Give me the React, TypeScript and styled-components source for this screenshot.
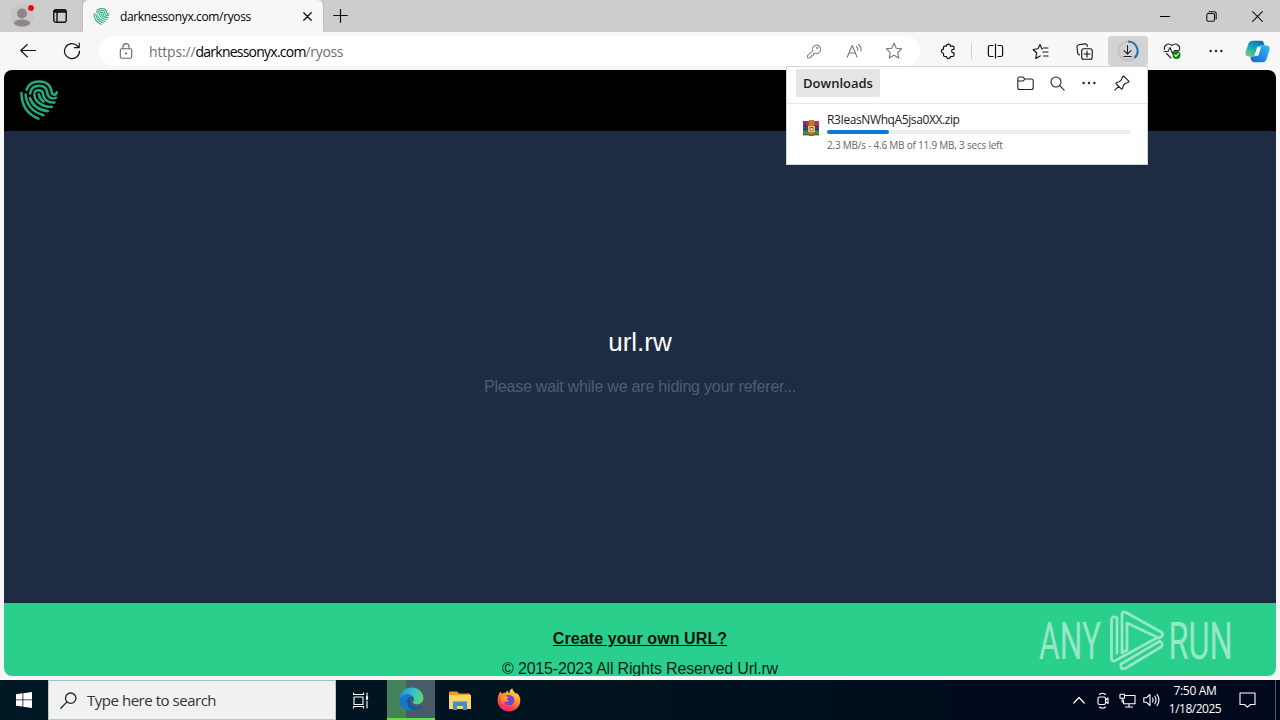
import type { ReactNode } from "react";
import styled, { createGlobalStyle } from "styled-components";

const GlobalStyle = createGlobalStyle`
  body {
    margin: 0;
    overflow: hidden;
    font-family: "Open Sans", "Noto Sans", sans-serif;
  }

  svg {
    display: block;
    flex: none;
  }
`;

const Screen = styled.div`
  position: relative;
  display: flex;
  flex-direction: column;
  width: 1280px;
  height: 720px;
  overflow: hidden;
  background: #f7f7f7;
`;

const Text = styled.span<{ $size: number; $spacing?: number; $color?: string; $weight?: number }>`
  font-size: ${(p) => p.$size}px;
  letter-spacing: ${(p) => p.$spacing ?? 0}px;
  color: ${(p) => p.$color ?? "#000"};
  font-weight: ${(p) => p.$weight ?? 400};
  white-space: nowrap;
`;

const Slot = styled.div<{ $w: number }>`
  display: flex;
  flex: none;
  align-items: center;
  justify-content: center;
  width: ${(p) => p.$w}px;
  height: 100%;
`;

const TabStrip = styled.div`
  display: flex;
  flex: none;
  height: 32px;
  background: #cdcdcd;
`;

const TabTools = styled.div`
  display: flex;
  width: 83px;
  box-sizing: border-box;
  padding-left: 3px;
  border-bottom-right-radius: 6px;
  border-right: 1px solid #bdbdbd;
`;

const Tab = styled.div`
  display: flex;
  align-items: center;
  width: 240px;
  box-sizing: border-box;
  padding-left: 10px;
  background: #f7f7f7;
  border-radius: 6px 6px 0 0;
`;

const TabTitle = styled.div`
  flex: 1;
  padding-left: 10px;
  line-height: 30px;
`;

const NewTab = styled.div`
  display: flex;
  align-items: center;
  flex: 1;
  padding-left: 9px;
  border-left: 1px solid #bdbdbd;
  border-bottom-left-radius: 6px;
`;

const Toolbar = styled.div`
  display: flex;
  flex: none;
  align-items: center;
  height: 38px;
  padding-left: 6px;
`;

const AddressBar = styled.div`
  display: flex;
  align-items: center;
  width: 821px;
  height: 30px;
  margin: 0 5px 0 5px;
  background: #fff;
  border-radius: 15px;
`;

const LockBox = styled.div`
  width: 50px;
  box-sizing: border-box;
  padding-left: 20px;
`;

const Url = styled.div`
  display: flex;
  flex: 1;
`;

const Divider = styled.div`
  width: 1px;
  height: 16px;
  margin: 0 1px;
  background: #cfcfcf;
`;

const DownloadButton = styled.div`
  display: flex;
  align-items: center;
  justify-content: center;
  width: 40px;
  height: 30px;
  background: #d3d3d3;
  border-radius: 4px;
`;

const Viewport = styled.div`
  display: flex;
  flex: none;
  flex-direction: column;
  height: 606px;
  margin: 0 4px 4px;
  overflow: hidden;
  border-radius: 8px;
  font-family: "Liberation Sans", Arial, sans-serif;
`;

const SiteHeader = styled.div`
  height: 61px;
  box-sizing: border-box;
  padding: 10px 16px;
  background: #000;
`;

const SiteBody = styled.div`
  display: flex;
  flex-direction: column;
  align-items: center;
  height: 472px;
  box-sizing: border-box;
  padding-top: 196px;
  background: #1d2c43;
`;

const Title = styled.div`
  color: #fff;
  font-size: 26px;
  line-height: 30px;
`;

const Notice = styled.div`
  margin-top: 21px;
  color: #4f5c72;
  font-size: 16px;
  letter-spacing: -0.21px;
  line-height: 18px;
`;

const SiteFooter = styled.div`
  display: flex;
  flex-direction: column;
  align-items: center;
  height: 73px;
  padding-top: 27px;
  box-sizing: border-box;
  background: #2acf8b;
  color: #06251a;
  font-size: 16px;
  line-height: 18px;
`;

const CreateLink = styled.a`
  margin-bottom: 12px;
  color: #03140d;
  font-weight: 700;
  letter-spacing: 0.09px;
  text-decoration: underline;
`;

const Copyright = styled.div`
  letter-spacing: -0.19px;
`;

const Popup = styled.div`
  position: absolute;
  left: 786px;
  top: 66px;
  width: 362px;
  height: 99px;
  box-sizing: border-box;
  background: #fff;
  border: 1px solid #d5d5d5;
`;

const PopupHeader = styled.div`
  display: flex;
  align-items: flex-start;
  height: 36px;
  padding: 0 9px;
  border-bottom: 1px solid #e6e6e6;
`;

const PopupTitle = styled.div`
  display: flex;
  align-items: center;
  justify-content: center;
  width: 84px;
  height: 28px;
  margin: 2px auto 0 0;
  background: #e5e5e5;
  border-radius: 2px;
`;

const PopupTools = styled.div`
  display: flex;
  height: 32px;
`;

const DownloadRow = styled.div`
  display: flex;
  align-items: flex-start;
  padding: 8px 16px 0 16px;
`;

const ArchiveIcon = styled.div`
  padding: 8px 8px 0 0;
`;

const DownloadInfo = styled.div`
  display: flex;
  flex: 1;
  flex-direction: column;
  line-height: 16px;
`;

const Track = styled.div`
  height: 4px;
  margin: 2px 0 3px;
  background: #ededed;
  border-radius: 2px;
`;

const Fill = styled.div`
  height: 4px;
  background: #0a78d4;
  border-radius: 2px;
`;

const Watermark = styled.div`
  position: absolute;
  left: 1034px;
  top: 604px;
`;

const Taskbar = styled.div`
  display: flex;
  flex: none;
  height: 40px;
  background: linear-gradient(90deg, #001823 0%, #00131f 50%, #000a1c 85%);
`;

const SearchBox = styled.div`
  display: flex;
  align-items: center;
  width: 288px;
  box-sizing: border-box;
  padding-left: 11px;
  gap: 10px;
  background: #f1f1f1;
  border: 1px solid #b9c6c8;
  border-top-color: #9cc4c0;
`;

const ActiveApp = styled.div`
  display: flex;
  align-items: center;
  justify-content: center;
  width: 48px;
  height: 40px;
  box-sizing: border-box;
  margin-left: 3px;
  background: linear-gradient(90deg, #43835a 0 19px, #485b66 19px);
  border-bottom: 2px solid #5fe04a;
`;

const Tray = styled.div`
  display: flex;
  margin-left: auto;
`;

const Clock = styled.div`
  display: flex;
  flex-direction: column;
  align-items: center;
  width: 62px;
  padding-top: 2px;
  line-height: 18px;
`;

const DesktopEdge = styled.div`
  width: 4px;
  margin-left: 6px;
  border-left: 1px solid #4b5361;
`;

type IconProps = { w: number; h?: number; box?: string; color?: string; stroke?: number; children: ReactNode };

const Icon = ({ w, h = w, box, color = "#222", stroke = 1.1, children }: IconProps) => (
  <svg
    width={w}
    height={h}
    viewBox={box ?? `0 0 ${w} ${h}`}
    fill="none"
    stroke={color}
    strokeWidth={stroke}
    strokeLinecap="round"
    strokeLinejoin="round"
  >
    {children}
  </svg>
);

const Fingerprint = ({ w, h, color }: { w: number; h: number; color: string }) => (
  <Icon w={w} h={h} box="0 0 38 40" color={color} stroke={2.5}>
    <path d="M1.400 13C1.600 26 8 34.500 18.500 38.600" />
    <path d="M5.600 14.500C6.500 25.500 12.500 32 23.500 35.200" />
    <path d="M6.600 9.500C8.500 3.500 13.500 1.400 19.500 1.400c7 0 11.300 4.200 11.900 9.600.5 4.700 4.600 4.700 5.300 1.200" />
    <path d="M9.900 18C12.500 25.500 18.500 30 28 31.200" />
    <path d="M10.200 13.500C10.800 8.300 14.500 5.800 19.300 5.800c4.700 0 7.400 2.600 7.900 6.700.6 5 4.400 7 8.600 5.300" />
    <path d="M14.300 14.300C14.800 21.500 21.500 27 31.800 27" />
    <path d="M14.800 12.300c1-2.500 7.400-3.300 8.200 1.500.9 6.200 5.300 9.400 11.500 8.700" />
    <path d="M18.700 14.200c.6 3.200 2.100 5.300 4.700 7.200" />
  </Icon>
);

const EdgeLogo = () => (
  <svg width="25" height="25" viewBox="0 0 25 25">
    <defs>
      <linearGradient id="edgeTop" x1="0" y1="0.3" x2="1" y2="0.5">
        <stop offset="0" stopColor="#238ed0" />
        <stop offset="0.5" stopColor="#31bfd0" />
        <stop offset="1" stopColor="#5adb71" />
      </linearGradient>
    </defs>
    <path d="M.6 12C1 5 6 .6 12.500.6 19.500.6 24.400 5.500 24.400 11c0 4-3 6.300-6.500 6.300-3 0-4.200-1.200-4-2.200.2-.7 1.100-1.200 1.100-3C15 9.500 12.200 7.400 8.800 7.400 4.500 7.400 1.600 10 .6 12z" fill="url(#edgeTop)" />
    <path d="M.6 12.500C1.500 9.500 4.500 7.400 8.300 7.400c3 0 5.200 1.200 6 3-4-1.400-6.500 1.500-6.300 5 .2 5 4.500 8.600 9.300 8.200C9 26.400.4 21 .6 12.500z" fill="#1677cf" />
    <path d="M14.300 10.400c-4.500-1.400-7.300 2-6.200 6 1.500 5.300 6.500 8.200 11.300 6.300 1.700-.8 3-2 3.800-3.300.3-.6-.2-.8-.7-.5-5.500 2.700-12-.5-11.200-5.600.2-1.500 1.200-2.600 3-2.900z" fill="#15599f" />
  </svg>
);

const FirefoxLogo = () => (
  <svg width="24" height="24" viewBox="0 0 24 24">
    <defs>
      <linearGradient id="fox" x1="0.8" y1="0" x2="0.3" y2="1">
        <stop offset="0" stopColor="#fff14f" />
        <stop offset="0.4" stopColor="#ff9b27" />
        <stop offset="0.75" stopColor="#ff4051" />
        <stop offset="1" stopColor="#e3208b" />
      </linearGradient>
    </defs>
    <path d="M3.500 3.500c.3 1 .8 1.700 1.500 2.200C6 5 7.500 4.600 8.600 4.800c.4-.9 1.200-1.700 2.200-2.200-.1 1 .4 2 1.700 2.700C12.200 3 13.500 1 15.500.4c0 2.600 2.200 3.700 3.800 5.500.3-.3.300-.9.200-1.500 2.500 2.300 3.800 5 3.800 8.200C23.300 18.800 18.400 23.500 12 23.500S.6 18.700.6 12.600c0-3.700 1-6.500 2.900-9.100z" fill="url(#fox)" />
    <path d="M7.500 8.600c2-2 5.800-2.500 8.300-.1 2.500 2.500 1.800 7-1.400 8.400-3.500 1.400-7-.8-7.200-3.800 1.500 1 3.500.6 4.600-.6-1.300-.3-1.900-1-2-1.900l2-1.100c-1.300-.7-2.800-1-4.300-.9z" fill="#7442d6" />
    <path d="M4.500 9c1-1.300 4.500-1.800 6.900.500l-2 1.400c0 1 .8 1.600 2.200 1.800-1.300 1.500-4 1.500-5.300.1-.7 1 0 3 1 4C4.500 15.500 3.500 11.500 4.500 9z" fill="#ff9a2c" />
  </svg>
);

const CopilotLogo = () => (
  <svg width="25" height="23" viewBox="0 0 26 24">
    <defs>
      <linearGradient id="coA" x1="0.8" y1="0" x2="0.2" y2="1">
        <stop offset="0" stopColor="#1762ba" />
        <stop offset="0.5" stopColor="#18a9b8" />
        <stop offset="1" stopColor="#63cf78" />
      </linearGradient>
      <linearGradient id="coB" x1="1" y1="0" x2="0" y2="1">
        <stop offset="0" stopColor="#2dbcf5" />
        <stop offset="1" stopColor="#1b5fdc" />
      </linearGradient>
    </defs>
    <path d="M8 .8h8.500c2 0 2.800 1.200 3.300 3l.7 2h-3.300c-2 0-3 1-3.600 3l-1.800 6c-.5 1.600-1.400 2.400-3.100 2.400H4c-3 0-4.200-2-3.300-5L3.300 4.500C4 2.200 5.500.8 8 .8z" fill="url(#coA)" />
    <path d="M18 23.200H9.500c-2 0-2.800-1.200-3.300-3l-.8-3h3.300c2 0 3-.9 3.500-2.500l2-6.300c.5-1.600 1.500-2.600 3.200-2.600H22c3 0 4.200 2 3.300 5l-2.600 8.600c-.7 2.400-2.200 3.800-4.700 3.800z" fill="url(#coB)" />
    <path d="M12.800 7h4l-3 9.500H9.800z" fill="#fff" />
  </svg>
);

const Star = ({ color }: { color: string }) => (
  <Icon w={18} color={color}>
    <path d="M9 1.300l2.300 5 5.400.6-4 3.700 1.100 5.400L9 13.300 4.200 16l1.100-5.400-4-3.700 5.400-.6z" />
  </Icon>
);

const Dots = () => (
  <svg width="14" height="4" viewBox="0 0 14 4" fill="#222">
    <circle cx="1.600" cy="2" r="1.200" />
    <circle cx="7" cy="2" r="1.200" />
    <circle cx="12.400" cy="2" r="1.200" />
  </svg>
);

const BrowserTabs = () => (
  <TabStrip>
    <TabTools>
      <Slot $w={38}>
        <svg width="26" height="26" viewBox="0 0 26 26">
          <circle cx="13" cy="13" r="12" fill="#c8c6c4" />
          <circle cx="13" cy="10.500" r="5" fill="#8b8886" />
          <path d="M5 20.500c0-5.500 16-5.500 16 0-2 4-14 4-16 0z" fill="#8b8886" />
          <circle cx="22" cy="5" r="3" fill="#df1018" />
        </svg>
      </Slot>
      <Slot $w={38}>
        <Icon w={14} color="#111" stroke={1.4}>
          <rect x=".8" y=".8" width="12.400" height="12.400" rx="2" />
          <path d="M1.500 2.500h11" strokeWidth="2.400" />
          <path d="M4 3v10" />
        </Icon>
      </Slot>
    </TabTools>
    <Tab>
      <Fingerprint w={17} h={17} color="#2fae86" />
      <TabTitle>
        <Text $size={12} $spacing={-0.36}>darknessonyx.com/ryoss</Text>
      </TabTitle>
      <Slot $w={32}>
        <Icon w={9} color="#111" stroke={1.3}>
          <path d="M.8.8l7.400 7.400M8.200.8L.8 8.200" />
        </Icon>
      </Slot>
    </Tab>
    <NewTab>
      <Icon w={15} h={14} color="#111" stroke={1.2}>
        <path d="M7.500.5v13M.7 6.500h13.600" />
      </Icon>
    </NewTab>
    <Slot $w={46}>
      <Icon w={10} color="#000" stroke={1}>
        <path d="M0 5.500h10" />
      </Icon>
    </Slot>
    <Slot $w={46}>
      <Icon w={11} color="#111">
        <rect x=".8" y="2.500" width="7.700" height="7.700" rx="1.500" />
        <path d="M3 .7h5.200q2 0 2 2V8" />
      </Icon>
    </Slot>
    <Slot $w={46}>
      <Icon w={11} color="#111">
        <path d="M.6.6l9.800 9.800M10.400.6L.6 10.400" />
      </Icon>
    </Slot>
  </TabStrip>
);

const BrowserToolbar = () => (
  <Toolbar>
    <Slot $w={44}>
      <Icon w={16} h={14} color="#111">
        <path d="M15.500 6.500H.8M7.300.5L.8 6.500l6.500 6.500" />
      </Icon>
    </Slot>
    <Slot $w={44}>
      <Icon w={18} color="#111" stroke={1.2}>
        <path d="M16.500 9A7.500 7.500 0 1 1 14.500 4L16 5.500M16.200 1v4.700h-4.700" />
      </Icon>
    </Slot>
    <AddressBar>
      <LockBox>
        <Icon w={14} h={16} color="#666">
          <rect x="1.300" y="5.700" width="11.400" height="9.500" rx="1.500" />
          <path d="M4 5.500V3.600a3 3 0 0 1 6 0v1.900" />
          <circle cx="7" cy="10.500" r=".5" />
        </Icon>
      </LockBox>
      <Url>
        <Text $size={14} $spacing={-0.15} $color="#707070">https://</Text>
        <Text $size={14} $spacing={-0.77}>darknessonyx.com</Text>
        <Text $size={14} $spacing={-0.35} $color="#707070">/ryoss</Text>
      </Url>
      <Slot $w={40}>
        <Icon w={16} color="#8b8b8b">
          <path d="M6.700 8.200A4.200 4.200 0 1 1 9 10.300l-1.500.2v1.800H5.700v1.500H4.200v1.200H1.500v-2.500z" />
          <circle cx="11.200" cy="5" r=".6" />
        </Icon>
      </Slot>
      <Slot $w={40}>
        <Icon w={17} h={16} color="#777">
          <path d="M1.300 14L6.200 2.500 11 14M3 10h6.500M10.500 3.500q1.700 1.600 1.300 4M12.500 1.500q3.200 2.500 2.500 6.500" />
        </Icon>
      </Slot>
      <Slot $w={40}>
        <Star color="#777" />
      </Slot>
      <Slot $w={6} />
    </AddressBar>
    <Slot $w={45}>
      <Icon w={16} color="#111" stroke={1.2}>
        <path d="M4.700 3.200h1.700a2 2 0 0 1 4 0h2.400q1.200 0 1.200 1.200v1.900h-.6a1.800 1.800 0 0 0 0 3.600h.6v2.400q0 1.200-1.200 1.200h-2.400a2 2 0 0 1-4 0H4.700q-1.200 0-1.200-1.200v-2a2.100 2.100 0 0 1 0-4.200V4.400q0-1.200 1.200-1.200z" />
      </Icon>
    </Slot>
    <Divider />
    <Slot $w={45}>
      <Icon w={17} h={16} color="#111" stroke={1.2}>
        <path d="M8.500 1v14M6 2.500H3.200q-1.800 0-1.800 1.800v7.400q0 1.800 1.800 1.800H6M11 2.500h2.800q1.800 0 1.800 1.800v7.400q0 1.800-1.800 1.800H11" />
      </Icon>
    </Slot>
    <Slot $w={44}>
      <Icon w={17} color="#111">
        <path d="M10.500 6H9.900L8 1.500 6 5.800l-4.900.7 3.600 3.500-1 5.500 4.500-2.600M11.500 5H16M10.800 9H16M11.500 13H16" />
      </Icon>
    </Slot>
    <Slot $w={44}>
      <Icon w={17} color="#111">
        <rect x="5.700" y="5.700" width="10.500" height="10.500" rx="2" />
        <path d="M11 8v6M8 11h6M3.500 12Q1.800 11.300 1.600 9.600L1 4Q.9 2 2.700 1.700L9 .9q2-.1 2.300 1.600l.1.900" />
      </Icon>
    </Slot>
    <Slot $w={44}>
      <DownloadButton>
        <Icon w={22} color="#222">
          <circle cx="11" cy="11" r="9.500" stroke="#c2c2c2" strokeWidth="1.800" />
          <path d="M11 1.500a9.500 9.500 0 0 1 6.500 16.500" stroke="#2473b8" strokeWidth="2" strokeLinecap="butt" />
          <path d="M10.500 5.500v8.500M7 10.700l3.500 3.500 3.500-3.500M6.800 16.500h7.500" />
        </Icon>
      </DownloadButton>
    </Slot>
    <Slot $w={44}>
      <Icon w={18} color="#222">
        <path d="M1.500 7.500C.5 3.500 5 0 9 3.500 13 0 17.500 3.500 16.500 7.500M1 9.500h4l2-4 2.500 6 2-3h4.700M3.500 11.500L8 16" />
        <circle cx="13.500" cy="13" r="4" fill="#168018" stroke="none" />
        <path d="M11.700 13l1.200 1.300 2.500-2.600" stroke="#fff" />
      </Icon>
    </Slot>
    <Slot $w={44}>
      <Dots />
    </Slot>
    <Slot $w={38}>
      <CopilotLogo />
    </Slot>
  </Toolbar>
);

const DownloadsPopup = () => (
  <Popup>
    <PopupHeader>
      <PopupTitle>
        <Text $size={13} $weight={600} $color="#222">Downloads</Text>
      </PopupTitle>
      <PopupTools>
        <Slot $w={32}>
          <Icon w={17} h={15}>
            <path d="M.8 3Q.8 1 2.800 1h2.500q.8 0 1.300.7L7.700 3h6.500q2 0 2 2v6.500q0 2-2 2H2.800q-2 0-2-2zM1 5h4.700q.8 0 1.200-.7L7.700 3" />
          </Icon>
        </Slot>
        <Slot $w={32}>
          <Icon w={15}>
            <circle cx="6" cy="6" r="5" />
            <path d="M9.700 9.700l4.500 4.500" />
          </Icon>
        </Slot>
        <Slot $w={32}>
          <Dots />
        </Slot>
        <Slot $w={33}>
          <Icon w={16}>
            <path d="M9.600 1l5.400 5.400-1 1.200-2.700.9-2 2-.8 3-1 .7L1.800 8.500l.7-1 3-.8 2-2L8.400 2zM4.700 11.300L.8 15.200" />
          </Icon>
        </Slot>
      </PopupTools>
    </PopupHeader>
    <DownloadRow>
      <ArchiveIcon>
        <svg width="16" height="16" viewBox="0 0 16 16">
          <path fill="#c03548" d="M0 1h16v5H0z" />
          <path fill="#364987" d="M0 6h16v4H0z" />
          <path fill="#3f8a3f" d="M0 10h16v5H0z" />
          <path fill="#8a2f6a" d="M0 1h4v5H0z" />
          <path fill="#c9752d" d="M6 0h5v16H6z" />
          <path fill="#e7c44d" d="M5 6h7v6H5z" />
          <path fill="#8a5a3c" d="M6.500 7h4v3.500h-4z" />
          <path fill="#f0ead8" d="M7.500 8h2v2h-2z" />
          <path stroke="#302540" strokeWidth=".6" d="M0 6h5M12 6h4M0 10h5M12 10h4M0 15h16" />
        </svg>
      </ArchiveIcon>
      <DownloadInfo>
        <Text $size={12} $spacing={-0.4} $color="#222">R3IeasNWhqA5jsa0XX.zip</Text>
        <Track>
          <Fill style={{ width: `${(4.6 / 11.9) * 52.5}%` }} />
        </Track>
        <Text $size={10} $spacing={-0.22} $color="#666">2.3 MB/s - 4.6 MB of 11.9 MB, 3 secs left</Text>
      </DownloadInfo>
    </DownloadRow>
  </Popup>
);

const AnyRunMark = () => (
  <Watermark>
    <svg width="204" height="72" viewBox="0 0 204 72" fill="#fff" opacity="0.5">
      <g fontFamily="Roboto" fontSize="52" fontWeight="400">
        <text transform="translate(5 55) scale(0.61 1)">ANY</text>
        <text transform="translate(134.500 55) scale(0.625 1)">RUN</text>
      </g>
      <g fill="none" stroke="#fff" strokeWidth="2.800" strokeLinejoin="round" strokeLinecap="round">
        <path d="M125 34l3-2q2-2-1-4L92 8.500q-4-2-4 2V49l5-3V19l32 15" />
        <path d="M83 14q-5-3-5.500 2v38q0 4.500 4 2.500l42-23M83 14v35" />
        <path d="M87 60q-1 7 5 4l35-21q3-3-1-6L87 60" />
      </g>
    </svg>
  </Watermark>
);

const WindowsTaskbar = () => (
  <Taskbar>
    <Slot $w={48}>
      <svg width="16" height="16" viewBox="0 0 16 16" fill="#fff">
        <path d="M0 2.200l6.500-.9v6.200H0zM7.300 1.200L16 0v7.500H7.300zM0 8.300h6.500v6.300L0 13.700zM7.300 8.300H16V16l-8.700-1.200z" />
      </svg>
    </Slot>
    <SearchBox>
      <Icon w={17} color="#222" stroke={1.3}>
        <circle cx="10.700" cy="6.200" r="5.200" />
        <path d="M7 9.900L.8 16.200" />
      </Icon>
      <Text $size={15} $spacing={-0.47} $color="#333">Type here to search</Text>
    </SearchBox>
    <Slot $w={48}>
      <Icon w={17} color="#fff" stroke={1.1}>
        <rect x="2" y="5" width="9" height="7.500" />
        <path d="M1.500 1v1.500h10V1M1.500 16v-1.500h10V16M15 1v2.500M15 9v7" />
        <path d="M15 5v2" strokeWidth="2.200" />
      </Icon>
    </Slot>
    <ActiveApp>
      <EdgeLogo />
    </ActiveApp>
    <Slot $w={49}>
      <svg width="22" height="19" viewBox="0 0 22 19">
        <path d="M0 1.500Q0 .5 1 .5h7l2 2h11V6H0z" fill="#e6a11e" />
        <path d="M0 4h22v14H0z" fill="#fbd364" />
        <path d="M4 10.500h14V19h-4v-4H8v4H4z" fill="#3c91cc" />
        <path d="M8 15h6v3H8z" fill="#fbd364" />
      </svg>
    </Slot>
    <Slot $w={49}>
      <FirefoxLogo />
    </Slot>
    <Tray>
      <Slot $w={25}>
        <Icon w={12} h={8} color="#fff" stroke={1.2}>
          <path d="M.8 7L6 1.500 11.200 7" />
        </Icon>
      </Slot>
      <Slot $w={24}>
        <Icon w={12} h={17} color="#fff">
          <rect x="1" y="5" width="7.500" height="7.500" rx="1.500" />
          <path d="M8.500 8l2.500-2v5.500l-2.500-2M2.500 2.500q3-2.500 6 0M2.500 15q3 2.500 6 0" />
        </Icon>
      </Slot>
      <Slot $w={24}>
        <Icon w={17} h={15} color="#fff">
          <path d="M5.500 2.500H16v8.300H4.500V7M10 11v3M6.500 14h7M1 1.200h4.500v4H1zM3.200 5.500V9" />
        </Icon>
      </Slot>
      <Slot $w={24}>
        <Icon w={17} h={14} color="#fff">
          <path d="M.8 4.800h2.500L7 1.500v11L3.300 9.200H.8zM9.500 5q1.200 2 0 4M11.800 3.200q2.500 3.800 0 7.600M14 1.400q4 5.600 0 11.200" />
        </Icon>
      </Slot>
      <Slot $w={1} />
      <Clock>
        <Text $size={12} $spacing={-0.3} $color="#fff">7:50 AM</Text>
        <Text $size={12} $spacing={-0.5} $color="#fff">1/18/2025</Text>
      </Clock>
      <Slot $w={43}>
        <Icon w={17} h={16} color="#fff">
          <path d="M1 1h15v11.500h-4.500l-3 2.700-3-2.700H1z" />
        </Icon>
      </Slot>
      <DesktopEdge />
    </Tray>
  </Taskbar>
);

export default function App() {
  return (
    <>
      <GlobalStyle />
      <Screen>
        <BrowserTabs />
        <BrowserToolbar />
        <Viewport>
          <SiteHeader>
            <Fingerprint w={38} h={40} color="#22aa80" />
          </SiteHeader>
          <SiteBody>
            <Title>url.rw</Title>
            <Notice>Please wait while we are hiding your referer...</Notice>
          </SiteBody>
          <SiteFooter>
            <CreateLink>Create your own URL?</CreateLink>
            <Copyright>© 2015-2023 All Rights Reserved Url.rw</Copyright>
          </SiteFooter>
        </Viewport>
        <WindowsTaskbar />
        <DownloadsPopup />
        <AnyRunMark />
      </Screen>
    </>
  );
}
